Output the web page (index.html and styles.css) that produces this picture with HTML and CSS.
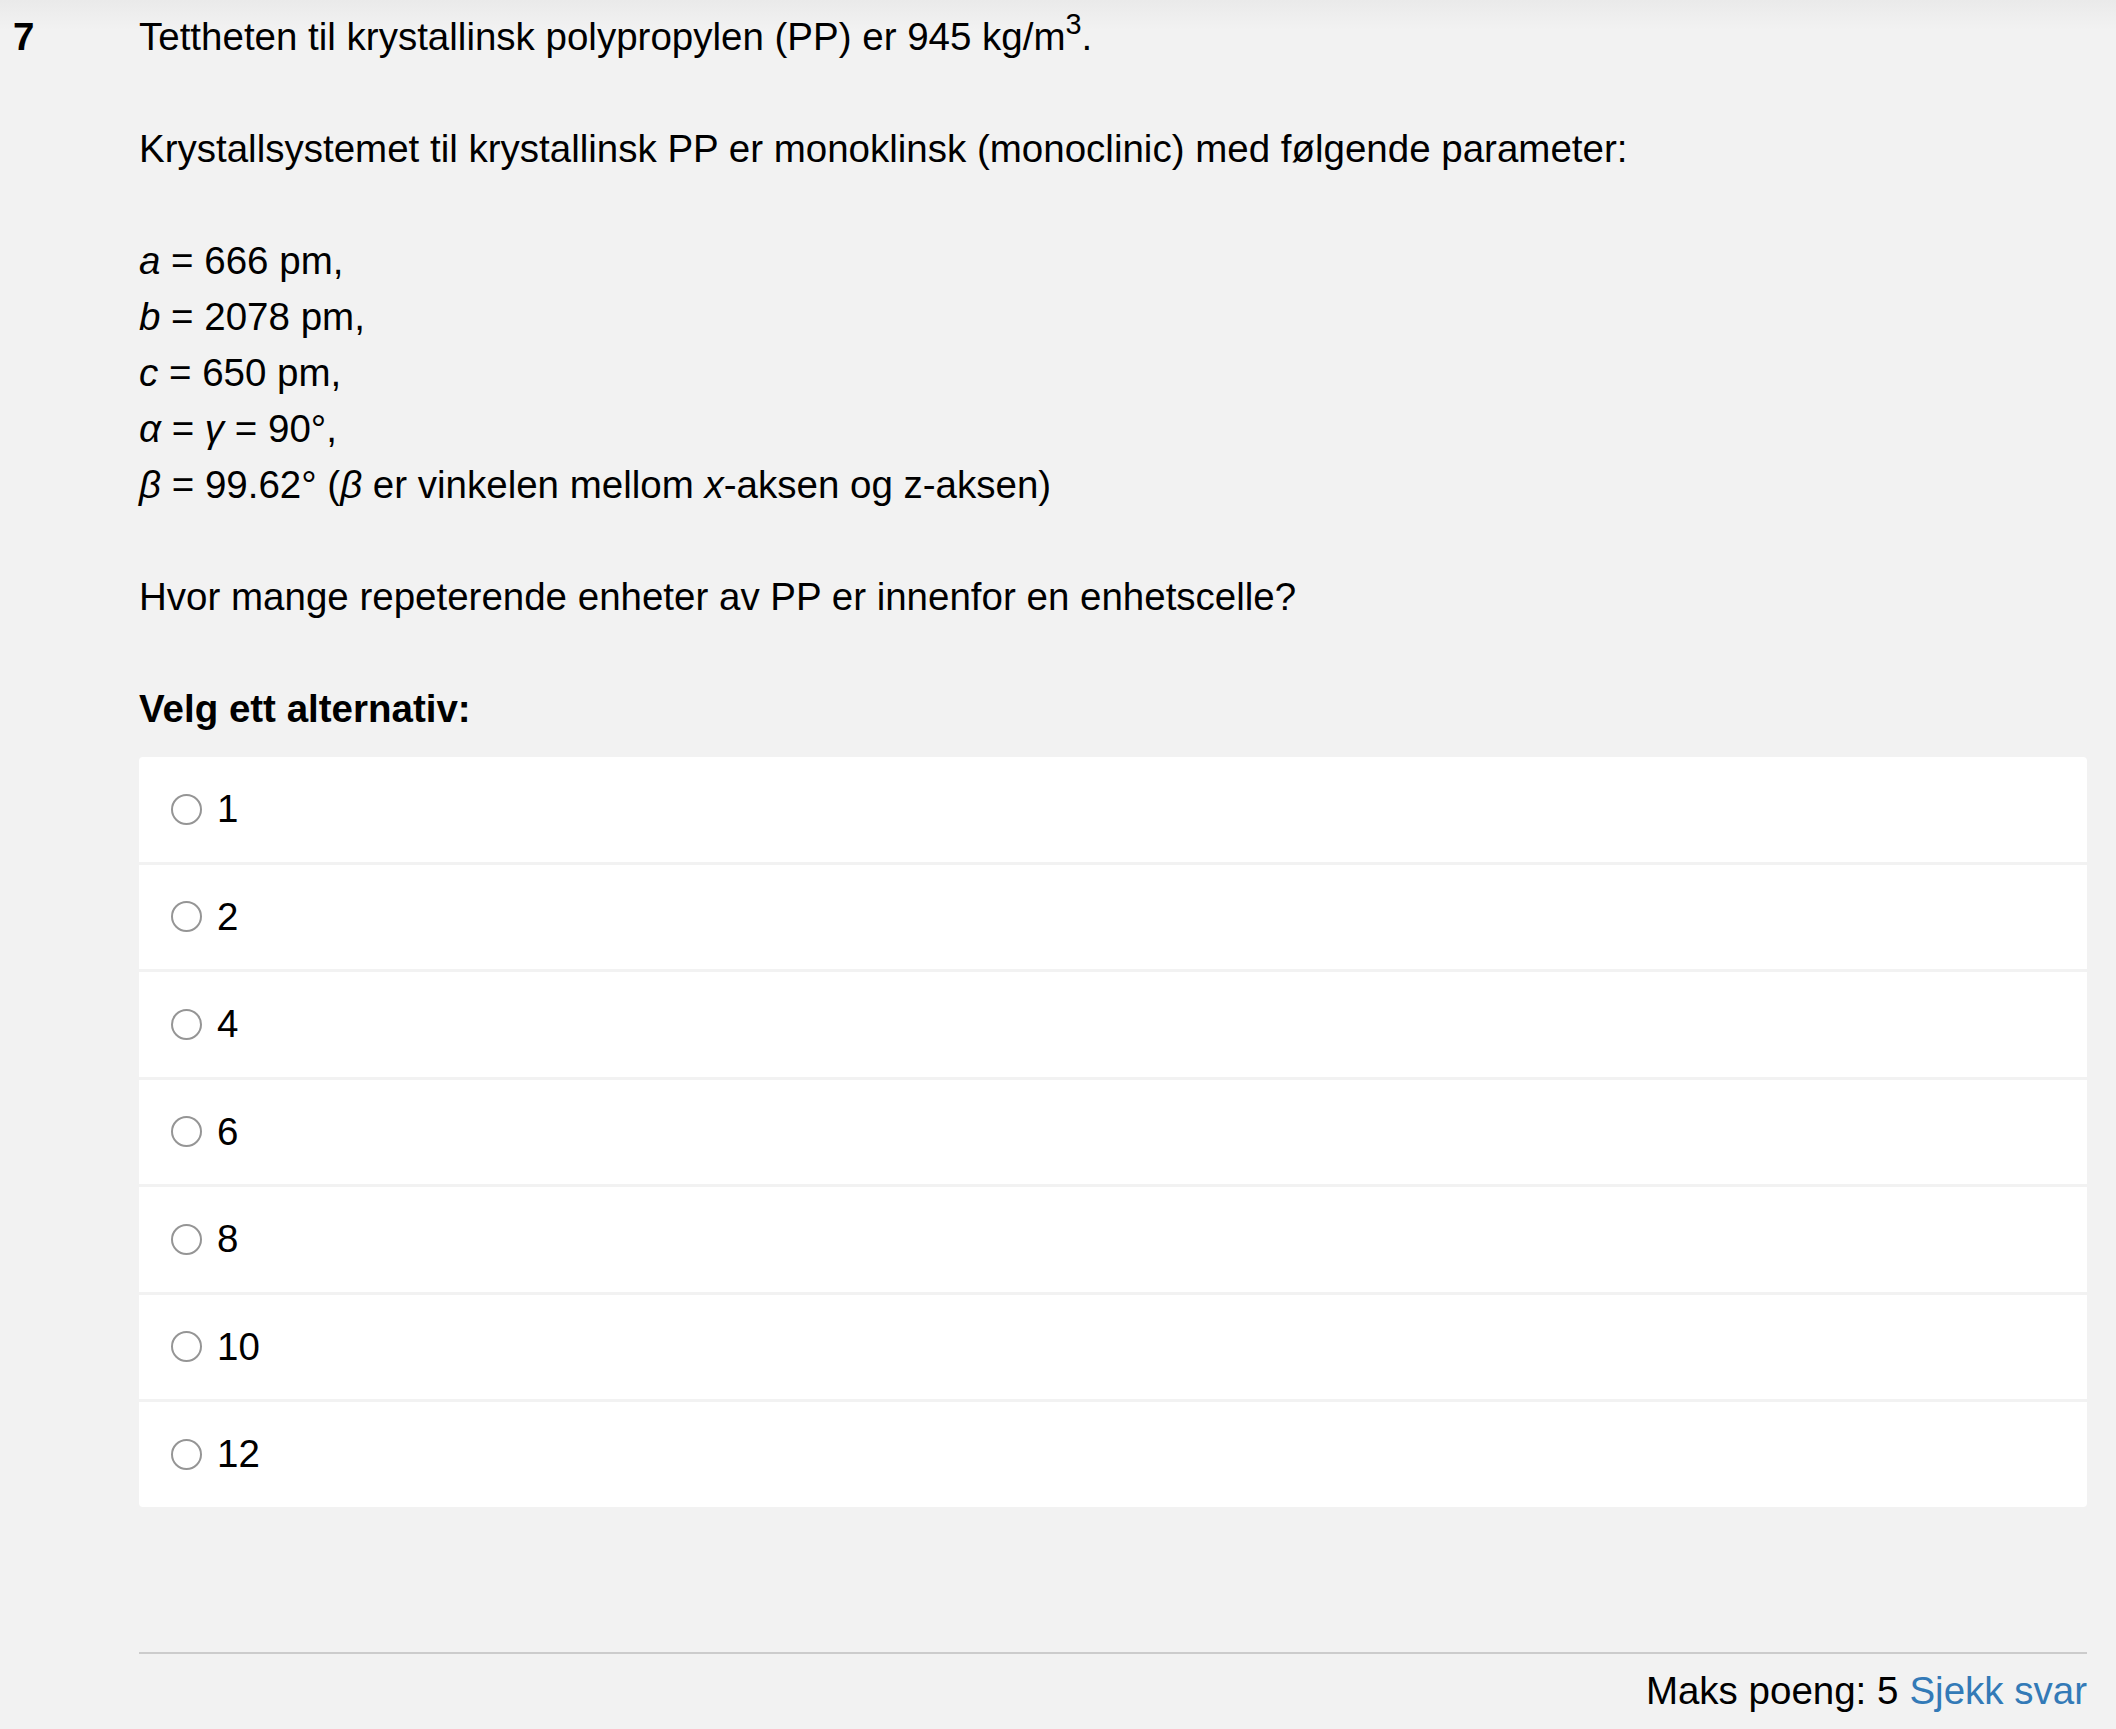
FILE: index.html
```html
<!DOCTYPE html>
<html lang="no">
<head>
<meta charset="utf-8">
<title>Spørsmål 7</title>
<link rel="stylesheet" href="styles.css">
</head>
<body>
<div class="question">
  <div class="qnum">7</div>
  <div class="qbody">
    <p>Tettheten til krystallinsk polypropylen (PP) er 945 kg/m<sup>3</sup>.</p>
    <p>Krystallsystemet til krystallinsk PP er monoklinsk (monoclinic) med følgende parameter:</p>
    <p><i>a</i> = 666 pm,<br><i>b</i> = 2078 pm,<br><i>c</i> = 650 pm,<br><i>α</i> = <i>γ</i> = 90°,<br><i>β</i> = 99.62° (<i>β</i> er vinkelen mellom <i>x</i>-aksen og z-aksen)</p>
    <p>Hvor mange repeterende enheter av PP er innenfor en enhetscelle?</p>
    <div class="choose-label">Velg ett alternativ:</div>
    <div class="options">
      <label class="option"><input type="radio" name="q7" class="radio"><span>1</span></label>
      <label class="option"><input type="radio" name="q7" class="radio"><span>2</span></label>
      <label class="option"><input type="radio" name="q7" class="radio"><span>4</span></label>
      <label class="option"><input type="radio" name="q7" class="radio"><span>6</span></label>
      <label class="option"><input type="radio" name="q7" class="radio"><span>8</span></label>
      <label class="option"><input type="radio" name="q7" class="radio"><span>10</span></label>
      <label class="option"><input type="radio" name="q7" class="radio"><span>12</span></label>
    </div>
    <div class="footer">
      <span>Maks poeng: 5</span>
      <a href="#" class="check">Sjekk svar</a>
    </div>
  </div>
</div>
</body>
</html>
```
FILE: styles.css
```css
html, body {
  margin: 0;
  padding: 0;
}
body {
  background: linear-gradient(#eaeaea 0, #f2f2f2 30px, #f2f2f2 100%);
  background-color: #f2f2f2;
  font-family: "Liberation Sans", Arial, sans-serif;
  font-size: 38.5px;
  line-height: 56px;
  color: #000;
  min-height: 1729px;
}
.question {
  display: flex;
  padding: 9px 29px 0 13px;
}
.qnum {
  width: 126px;
  flex: none;
  font-weight: bold;
}
.qbody {
  flex: 1;
  min-width: 0;
}
.qbody p {
  margin: 0 0 56px 0;
}
sup {
  font-size: 75%;
  line-height: 0;
  position: relative;
  vertical-align: baseline;
  top: -0.55em;
}
.choose-label {
  font-weight: bold;
  margin-bottom: 20px;
}
.options {
  display: flex;
  flex-direction: column;
  gap: 3px;
  background: #f2f2f2;
  border-radius: 4px;
  overflow: hidden;
}
.option {
  display: flex;
  align-items: center;
  height: 104.5px;
  padding: 0 0 0 32px;
  background: #fff;
  box-sizing: border-box;
  gap: 15px;
}
.radio {
  appearance: none;
  -webkit-appearance: none;
  margin: 0;
  width: 31px;
  height: 31px;
  border: 2px solid #959595;
  border-radius: 50%;
  background: #fff;
  box-sizing: border-box;
  flex: none;
}
.footer {
  margin-top: 145px;
  border-top: 2px solid #cccccc;
  padding-top: 9px;
  display: flex;
  justify-content: flex-end;
  gap: 11px;
}
.check {
  color: #337ab7;
  text-decoration: none;
}
```
